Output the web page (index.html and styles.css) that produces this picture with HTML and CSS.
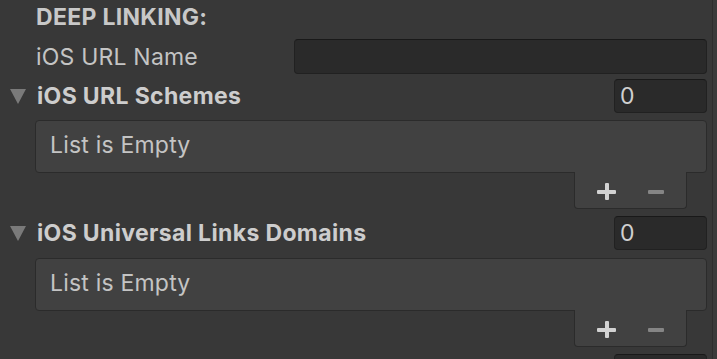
FILE: index.html
```html
<!DOCTYPE html>
<html lang="en">
<head>
    <meta charset="UTF-8">
    <title>Deep Linking</title>
    <link rel="stylesheet" href="styles.css">
</head>
<body>
    <div class="inspector">
        <div class="panel">
            <div class="heading">DEEP LINKING:</div>

            <div class="row">
                <span class="label">iOS URL Name</span>
                <div class="field text-field"></div>
            </div>

            <div class="row foldout">
                <span class="arrow"></span>
                <span class="label bold">iOS URL Schemes</span>
                <div class="field count">0</div>
            </div>
            <div class="list">List is Empty</div>
            <div class="list-footer">
                <span class="btn plus"></span>
                <span class="btn minus"></span>
            </div>

            <div class="row foldout gap">
                <span class="arrow"></span>
                <span class="label bold">iOS Universal Links Domains</span>
                <div class="field count">0</div>
            </div>
            <div class="list">List is Empty</div>
            <div class="list-footer">
                <span class="btn plus"></span>
                <span class="btn minus"></span>
            </div>

            <div class="row foldout gap">
                <div class="field count"></div>
            </div>
        </div>
        <div class="scroll-strip"></div>
    </div>
</body>
</html>
```

FILE: styles.css
```css
body {
    margin: 0;
    background: #383838;
    font-family: Inter, "Noto Sans", sans-serif;
    font-size: 23px;
    letter-spacing: 0.2px;
    color: #c4c4c4;
}
.inspector {
    display: flex;
    height: 359px;
    overflow: hidden;
}
.panel {
    flex: 1;
    padding-right: 5px;
}
.scroll-strip {
    width: 4px;
    border-left: 1px solid #2e2e2e;
    background: #3b3b3b;
}
.heading {
    height: 39px;
    padding-left: 36px;
    font-weight: 700;
    letter-spacing: 0.3px;
    line-height: 35px;
    color: #c8c8c8;
}
.row {
    display: flex;
    align-items: center;
    height: 35px;
    padding-left: 36px;
}
.row .label {
    width: 258px;
}
.bold {
    font-weight: 700;
    letter-spacing: 0.35px;
    color: #cdcdcd;
}
.foldout {
    position: relative;
    margin-top: 5px;
    height: 34px;
}
.foldout.gap {
    margin-top: 7px;
}
.foldout .label {
    flex: 1;
    padding-left: 1px;
}
.arrow {
    position: absolute;
    left: 10px;
    top: 10px;
    width: 0;
    height: 0;
    border-left: 8px solid transparent;
    border-right: 8px solid transparent;
    border-top: 15px solid #7a7a7a;
}
.field {
    box-sizing: border-box;
    height: 100%;
    background: #2a2a2a;
    border: 1px solid #212121;
    border-top-color: #191919;
    border-radius: 4px;
}
.text-field {
    flex: 1;
}
.count {
    flex: none;
    width: 93px;
    margin-left: auto;
    padding-left: 5px;
    line-height: 32px;
    color: #d0d0d0;
}
.list {
    box-sizing: border-box;
    height: 53px;
    margin: 7px 0 0 35px;
    padding-left: 14px;
    line-height: 49px;
    background: #414141;
    border: 1px solid #2b2b2b;
    border-radius: 4px;
    color: #c4c4c4;
}
.foldout.gap + .list {
    margin-top: 8px;
}
.list-footer {
    box-sizing: border-box;
    display: flex;
    align-items: center;
    width: 113px;
    height: 37px;
    margin: -1px 20px 0 auto;
    padding: 3px 0 0 22px;
    gap: 31px;
    background: #414141;
    border: 1px solid #2b2b2b;
    border-top: none;
    border-radius: 0 0 4px 4px;
}
.btn {
    display: block;
    position: relative;
    width: 19px;
    height: 16px;
}
.plus::before,
.plus::after {
    content: "";
    position: absolute;
    background: #d2d2d2;
    border-radius: 1px;
}
.plus::before {
    left: 0;
    top: 6px;
    width: 19px;
    height: 4px;
}
.plus::after {
    left: 8px;
    top: -1px;
    width: 4px;
    height: 17px;
}
.minus::before {
    content: "";
    position: absolute;
    left: 1px;
    top: 6px;
    width: 16px;
    height: 4px;
    background: #858585;
    border-radius: 1px;
}
```
